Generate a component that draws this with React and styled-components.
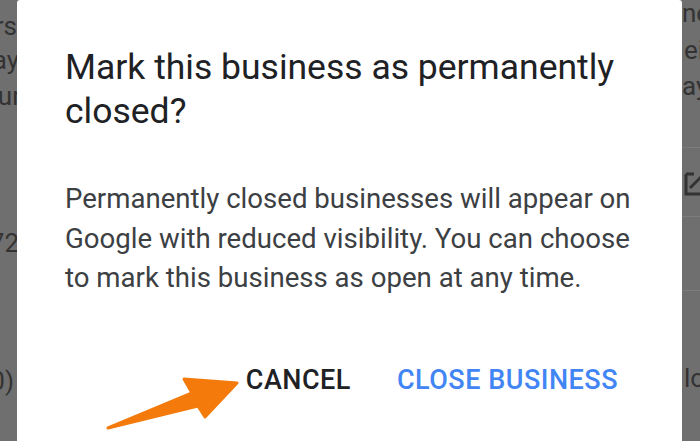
import React from "react";
import styled, { createGlobalStyle } from "styled-components";

const GlobalStyle = createGlobalStyle`
  html, body { margin: 0; padding: 0; background: #6f6f6f; }
  body { font-family: Roboto, "Noto Sans", Arial, sans-serif; overflow: hidden; }
`;

const Screen = styled.div`
  position: relative;
  width: 700px;
  height: 441px;
  overflow: hidden;
  background: #6f6f6f;
  display: flex;
  justify-content: space-between;
`;

const Strip = styled.div`
  width: ${(p) => p.$width}px;
  overflow: hidden;
  display: flex;
  flex-direction: column;
  color: #333333;
  font-size: 26px;
  line-height: 36px;
`;

const BgLine = styled.div`
  display: flex;
  justify-content: ${(p) => (p.$side === "left" ? "flex-end" : "flex-start")};
  box-sizing: border-box;
  width: 100%;
  margin-top: ${(p) => p.$top}px;
  padding-right: ${(p) => p.$pad || 0}px;
  padding-left: ${(p) => p.$shift || 0}px;
  white-space: nowrap;
`;

const Divider = styled.div`
  width: 100%;
  height: 1px;
  flex: none;
  background: #7c7c7c;
  margin-top: ${(p) => p.$top}px;
`;

const EditIcon = styled.svg`
  margin-top: ${(p) => p.$top}px;
  margin-left: 2px;
  flex: none;
`;

const Dialog = styled.div`
  position: absolute;
  left: 17px;
  right: 18px;
  top: 0;
  bottom: -20px;
  background: #ffffff;
  border-radius: 3px;
  padding: 45px 0 0 48px;
  box-sizing: border-box;
  display: flex;
  flex-direction: column;
`;

const Title = styled.h2`
  margin: 0;
  max-width: 585px;
  font-family: Roboto, "Noto Sans", Arial, sans-serif;
  font-weight: 400;
  font-size: 35.5px;
  line-height: 44px;
  color: #202124;
`;

const Body = styled.p`
  margin: 46px 0 0 0;
  max-width: 580px;
  font-size: 27.6px;
  line-height: 39.5px;
  color: #3c4043;
`;

const Actions = styled.div`
  display: flex;
  justify-content: flex-end;
  gap: 30px;
  margin-top: 62px;
  padding-right: 56px;
`;

const ActionButton = styled.button`
  border: none;
  background: transparent;
  padding: 0 8px;
  font-family: Roboto, "Noto Sans", Arial, sans-serif;
  font-weight: 500;
  font-size: 27px;
  line-height: 40px;
  letter-spacing: 0.5px;
  color: ${(p) => (p.$primary ? "#4285f4" : "#202124")};
  cursor: pointer;
`;

const Arrow = styled.svg`
  position: absolute;
  left: 100px;
  top: 370px;
  pointer-events: none;
`;

export default function App() {
  return (
    <>
      <GlobalStyle />
      <Screen>
        <Strip $width={40}>
          <BgLine $side="left" $top={8} $pad={23}>Hours</BgLine>
          <BgLine $side="left" $top={-2} $pad={21}>Today</BgLine>
          <BgLine $side="left" $top={0} $pad={19}>Your</BgLine>
          <BgLine $side="left" $top={111} $pad={21}>555-0172</BgLine>
          <BgLine $side="left" $top={102} $pad={26}>(10)</BgLine>
        </Strip>
        <Strip $width={18}>
          <BgLine $side="right" $top={-5} $shift={0}>now</BgLine>
          <BgLine $side="right" $top={1} $shift={2}>eir</BgLine>
          <BgLine $side="right" $top={0} $shift={0}>ays</BgLine>
          <Divider $top={43} />
          <EditIcon $top={22} width="22" height="26" viewBox="0 0 22 26">
            <path d="M2 4 H10 M2 4 V24 H20 V16" fill="none" stroke="#333" strokeWidth="3" />
            <path d="M6 18 L18 6" fill="none" stroke="#333" strokeWidth="3" />
          </EditIcon>
          <Divider $top={20} />
          <Divider $top={73} />
          <BgLine $side="right" $top={69} $shift={2}>locations</BgLine>
        </Strip>
        <Dialog>
          <Title>Mark this business as permanently closed?</Title>
          <Body>
            Permanently closed businesses will appear on Google with reduced
            visibility. You can choose to mark this business as open at any time.
          </Body>
          <Actions>
            <ActionButton>CANCEL</ActionButton>
            <ActionButton $primary>CLOSE BUSINESS</ActionButton>
          </Actions>
        </Dialog>
        <Arrow width="145" height="65" viewBox="0 0 145 65">
          <polygon
            points="8,58 92,23 84,9 137,13 105,47 98,36"
            fill="#f37a0b"
            stroke="#f37a0b"
            strokeWidth="3"
            strokeLinejoin="round"
          />
        </Arrow>
      </Screen>
    </>
  );
}
